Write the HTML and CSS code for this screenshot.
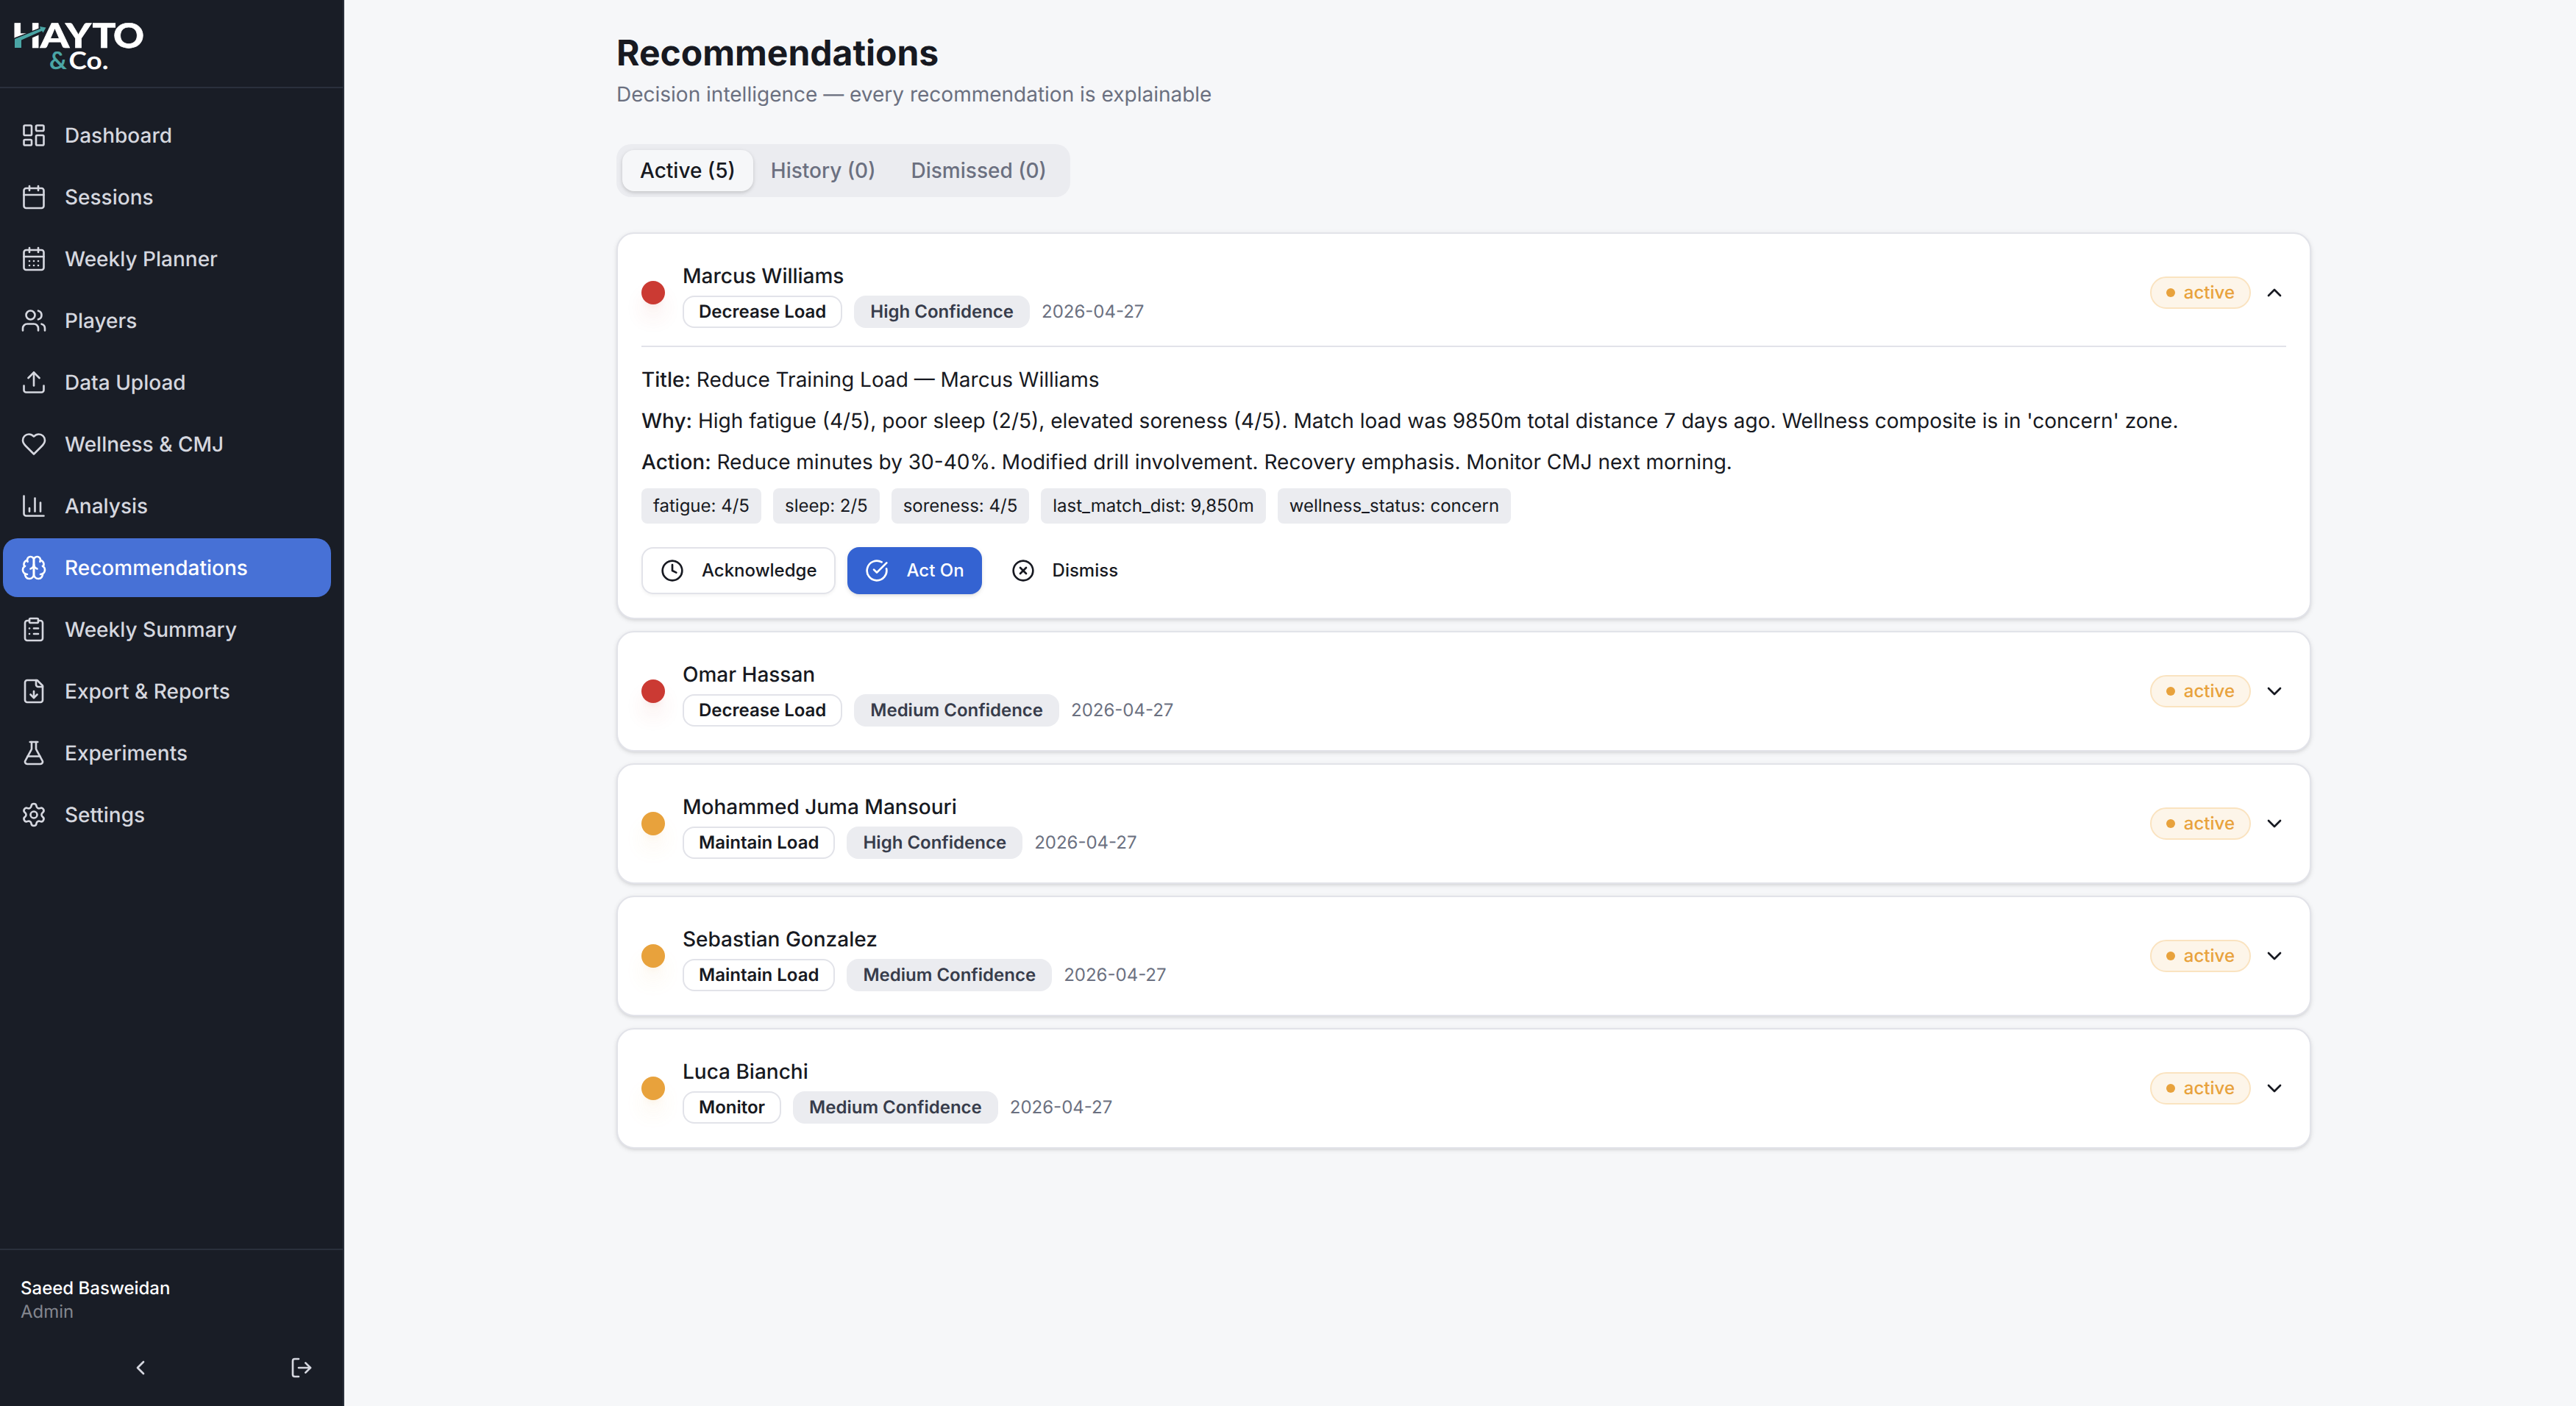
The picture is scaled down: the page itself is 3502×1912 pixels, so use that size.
FILE: index.html
```html
<!DOCTYPE html>
<html lang="en">
<head>
    <meta charset="UTF-8">
    <meta name="viewport" content="width=device-width, initial-scale=1.0">
    <title>Recommendations - Hayto &amp; Co.</title>
    <link rel="stylesheet" href="styles.css">
</head>
<body>
    <div class="app">
        <aside class="sidebar">
            <div class="brand">
                <svg class="logo" width="200" height="88" viewBox="-4 0 200 88">
                    <text class="logo-main" y="49"><tspan x="-2" textLength="40" lengthAdjust="spacingAndGlyphs">H</tspan><tspan x="36.800" textLength="39.500" lengthAdjust="spacingAndGlyphs">A</tspan><tspan x="71" textLength="35" lengthAdjust="spacingAndGlyphs">Y</tspan><tspan x="107.500" textLength="32" lengthAdjust="spacingAndGlyphs">T</tspan><tspan x="136" textLength="42" lengthAdjust="spacingAndGlyphs">O</tspan></text>
                    <path class="logo-gap" d="M2 37 L38 23 L44 21 L39 28 L11 40"/>
                    <path class="logo-arrow" d="M2 37 L37 23 L36 20 L44.500 21.500 L40.500 28.500 L39 26 L11 38.500 V49 H2 Z"/>
                    <text class="logo-amp" x="49" y="78">&amp;</text>
                    <text class="logo-co" x="75.500" y="78" textLength="54" lengthAdjust="spacingAndGlyphs">Co.</text>
                </svg>
            </div>

            <nav class="nav">
                <a class="nav-item">
                    <svg class="icon" viewBox="0 0 24 24"><rect x="3" y="3" width="7" height="9" rx="1"/><rect x="14" y="3" width="7" height="5" rx="1"/><rect x="14" y="12" width="7" height="9" rx="1"/><rect x="3" y="16" width="7" height="5" rx="1"/></svg>
                    Dashboard
                </a>
                <a class="nav-item">
                    <svg class="icon" viewBox="0 0 24 24"><path d="M8 2v4"/><path d="M16 2v4"/><rect x="3" y="4" width="18" height="18" rx="2"/><path d="M3 10h18"/></svg>
                    Sessions
                </a>
                <a class="nav-item">
                    <svg class="icon" viewBox="0 0 24 24"><path d="M8 2v4"/><path d="M16 2v4"/><rect x="3" y="4" width="18" height="18" rx="2"/><path d="M3 10h18"/><path d="M8 14h.01"/><path d="M12 14h.01"/><path d="M16 14h.01"/><path d="M8 18h.01"/><path d="M12 18h.01"/><path d="M16 18h.01"/></svg>
                    Weekly Planner
                </a>
                <a class="nav-item">
                    <svg class="icon" viewBox="0 0 24 24"><path d="M16 21v-2a4 4 0 0 0-4-4H6a4 4 0 0 0-4 4v2"/><circle cx="9" cy="7" r="4"/><path d="M22 21v-2a4 4 0 0 0-3-3.870"/><path d="M16 3.130a4 4 0 0 1 0 7.750"/></svg>
                    Players
                </a>
                <a class="nav-item">
                    <svg class="icon" viewBox="0 0 24 24"><path d="M12 3v12"/><path d="m17 8-5-5-5 5"/><path d="M21 15v4a2 2 0 0 1-2 2H5a2 2 0 0 1-2-2v-4"/></svg>
                    Data Upload
                </a>
                <a class="nav-item">
                    <svg class="icon" viewBox="0 0 24 24"><path d="M19 14c1.490-1.460 3-3.210 3-5.500A5.500 5.500 0 0 0 16.500 3c-1.760 0-3 .5-4.500 2-1.500-1.500-2.740-2-4.500-2A5.500 5.500 0 0 0 2 8.500c0 2.300 1.500 4.050 3 5.500l7 7Z"/></svg>
                    Wellness &amp; CMJ
                </a>
                <a class="nav-item">
                    <svg class="icon" viewBox="0 0 24 24"><path d="M3 3v16a2 2 0 0 0 2 2h16"/><path d="M18 17V9"/><path d="M13 17V5"/><path d="M8 17v-3"/></svg>
                    Analysis
                </a>
                <a class="nav-item active">
                    <svg class="icon" viewBox="0 0 24 24"><path d="M12 5a3 3 0 1 0-5.997.125 4 4 0 0 0-2.526 5.770 4 4 0 0 0 .556 6.588A4 4 0 1 0 12 18Z"/><path d="M12 5a3 3 0 1 1 5.997.125 4 4 0 0 1 2.526 5.770 4 4 0 0 1-.556 6.588A4 4 0 1 1 12 18Z"/><path d="M15 13a4.500 4.500 0 0 1-3-4 4.500 4.500 0 0 1-3 4"/><path d="M17.599 6.500a3 3 0 0 0 .399-1.375"/><path d="M6.003 5.125A3 3 0 0 0 6.401 6.500"/><path d="M3.477 10.896a4 4 0 0 1 .585-.396"/><path d="M19.938 10.500a4 4 0 0 1 .585.396"/><path d="M6 18a4 4 0 0 1-1.967-.516"/><path d="M19.967 17.484A4 4 0 0 1 18 18"/></svg>
                    Recommendations
                </a>
                <a class="nav-item">
                    <svg class="icon" viewBox="0 0 24 24"><rect x="8" y="2" width="8" height="4" rx="1"/><path d="M16 4h2a2 2 0 0 1 2 2v14a2 2 0 0 1-2 2H6a2 2 0 0 1-2-2V6a2 2 0 0 1 2-2h2"/><path d="M12 11h4"/><path d="M12 16h4"/><path d="M8 11h.01"/><path d="M8 16h.01"/></svg>
                    Weekly Summary
                </a>
                <a class="nav-item">
                    <svg class="icon" viewBox="0 0 24 24"><path d="M15 2H6a2 2 0 0 0-2 2v16a2 2 0 0 0 2 2h12a2 2 0 0 0 2-2V7Z"/><path d="M14 2v4a2 2 0 0 0 2 2h4"/><path d="M12 18v-6"/><path d="m9 15 3 3 3-3"/></svg>
                    Export &amp; Reports
                </a>
                <a class="nav-item">
                    <svg class="icon" viewBox="0 0 24 24"><path d="M14 2v6a2 2 0 0 0 .245.960l5.510 10.080A2 2 0 0 1 18 22H6a2 2 0 0 1-1.755-2.960l5.510-10.080A2 2 0 0 0 10 8V2"/><path d="M6.453 15h11.094"/><path d="M8.500 2h7"/></svg>
                    Experiments
                </a>
                <a class="nav-item">
                    <svg class="icon" viewBox="0 0 24 24"><path d="M9.671 4.136a2.340 2.340 0 0 1 4.659 0 2.340 2.340 0 0 0 3.319 1.915 2.340 2.340 0 0 1 2.330 4.033 2.340 2.340 0 0 0 0 3.831 2.340 2.340 0 0 1-2.330 4.033 2.340 2.340 0 0 0-3.319 1.915 2.340 2.340 0 0 1-4.659 0 2.340 2.340 0 0 0-3.320-1.915 2.340 2.340 0 0 1-2.330-4.033 2.340 2.340 0 0 0 0-3.831A2.340 2.340 0 0 1 6.350 6.051a2.340 2.340 0 0 0 3.319-1.915"/><circle cx="12" cy="12" r="3"/></svg>
                    Settings
                </a>
            </nav>

            <div class="user">
                <p class="user-name">Saeed Basweidan</p>
                <p class="user-role">Admin</p>
                <div class="user-actions">
                    <button class="collapse"><svg class="icon-sm" viewBox="0 0 24 24"><path d="m15 18-6-6 6-6"/></svg></button>
                    <button class="logout"><svg class="icon-sm" viewBox="0 0 24 24"><path d="M9 21H5a2 2 0 0 1-2-2V5a2 2 0 0 1 2-2h4"/><path d="m16 17 5-5-5-5"/><path d="M21 12H9"/></svg></button>
                </div>
            </div>
        </aside>

        <main class="main">
            <div class="content">
                <h1>Recommendations</h1>
                <p class="subtitle">Decision intelligence — every recommendation is explainable</p>

                <div class="tabs">
                    <button class="tab selected">Active (5)</button>
                    <button class="tab">History (0)</button>
                    <button class="tab">Dismissed (0)</button>
                </div>

                <div class="cards">
                    <section class="card">
                        <div class="card-head">
                            <span class="dot red"></span>
                            <div class="info">
                                <p class="name">Marcus Williams</p>
                                <div class="meta">
                                    <span class="badge outline">Decrease Load</span>
                                    <span class="badge">High Confidence</span>
                                    <span class="date">2026-04-27</span>
                                </div>
                            </div>
                            <span class="status">active</span>
                            <svg class="icon-sm" viewBox="0 0 24 24"><path d="m18 15-6-6-6 6"/></svg>
                        </div>
                        <div class="details">
                            <p><strong>Title:</strong> Reduce Training Load — Marcus Williams</p>
                            <p><strong>Why:</strong> High fatigue (4/5), poor sleep (2/5), elevated soreness (4/5). Match load was 9850m total distance 7 days ago. Wellness composite is in 'concern' zone.</p>
                            <p><strong>Action:</strong> Reduce minutes by 30-40%. Modified drill involvement. Recovery emphasis. Monitor CMJ next morning.</p>
                            <div class="tags">
                                <span class="tag">fatigue: 4/5</span>
                                <span class="tag">sleep: 2/5</span>
                                <span class="tag">soreness: 4/5</span>
                                <span class="tag">last_match_dist: 9,850m</span>
                                <span class="tag">wellness_status: concern</span>
                            </div>
                            <div class="actions">
                                <button class="btn btn-outline"><svg class="icon-sm" viewBox="0 0 24 24"><circle cx="12" cy="12" r="10"/><path d="M12 6v6l4 2"/></svg>Acknowledge</button>
                                <button class="btn btn-primary"><svg class="icon-sm" viewBox="0 0 24 24"><path d="M21.801 10A10 10 0 1 1 17 3.335"/><path d="m9 11 3 3L22 4"/></svg>Act On</button>
                                <button class="btn"><svg class="icon-sm" viewBox="0 0 24 24"><circle cx="12" cy="12" r="10"/><path d="m15 9-6 6"/><path d="m9 9 6 6"/></svg>Dismiss</button>
                            </div>
                        </div>
                    </section>

                    <section class="card">
                        <div class="card-head">
                            <span class="dot red"></span>
                            <div class="info">
                                <p class="name">Omar Hassan</p>
                                <div class="meta">
                                    <span class="badge outline">Decrease Load</span>
                                    <span class="badge">Medium Confidence</span>
                                    <span class="date">2026-04-27</span>
                                </div>
                            </div>
                            <span class="status">active</span>
                            <svg class="icon-sm" viewBox="0 0 24 24"><path d="m6 9 6 6 6-6"/></svg>
                        </div>
                    </section>

                    <section class="card">
                        <div class="card-head">
                            <span class="dot amber"></span>
                            <div class="info">
                                <p class="name">Mohammed Juma Mansouri</p>
                                <div class="meta">
                                    <span class="badge outline">Maintain Load</span>
                                    <span class="badge">High Confidence</span>
                                    <span class="date">2026-04-27</span>
                                </div>
                            </div>
                            <span class="status">active</span>
                            <svg class="icon-sm" viewBox="0 0 24 24"><path d="m6 9 6 6 6-6"/></svg>
                        </div>
                    </section>

                    <section class="card">
                        <div class="card-head">
                            <span class="dot amber"></span>
                            <div class="info">
                                <p class="name">Sebastian Gonzalez</p>
                                <div class="meta">
                                    <span class="badge outline">Maintain Load</span>
                                    <span class="badge">Medium Confidence</span>
                                    <span class="date">2026-04-27</span>
                                </div>
                            </div>
                            <span class="status">active</span>
                            <svg class="icon-sm" viewBox="0 0 24 24"><path d="m6 9 6 6 6-6"/></svg>
                        </div>
                    </section>

                    <section class="card">
                        <div class="card-head">
                            <span class="dot amber"></span>
                            <div class="info">
                                <p class="name">Luca Bianchi</p>
                                <div class="meta">
                                    <span class="badge outline">Monitor</span>
                                    <span class="badge">Medium Confidence</span>
                                    <span class="date">2026-04-27</span>
                                </div>
                            </div>
                            <span class="status">active</span>
                            <svg class="icon-sm" viewBox="0 0 24 24"><path d="m6 9 6 6 6-6"/></svg>
                        </div>
                    </section>
                </div>
            </div>
        </main>
    </div>
</body>
</html>
```
FILE: styles.css
```css
* {
    margin: 0;
    padding: 0;
    box-sizing: border-box;
}

body {
    font-family: 'Inter', 'Helvetica Neue', Arial, sans-serif;
    font-size: 28px;
    line-height: 40px;
    color: #171921;
    background-color: #f6f7f9;
    text-rendering: geometricPrecision;
}

button {
    font: inherit;
    color: inherit;
    background: none;
    border: none;
    cursor: pointer;
}

.app {
    display: flex;
    height: 100vh;
}

/* Icons */
.icon,
.icon-sm {
    flex: none;
    display: block;
    fill: none;
    stroke: currentColor;
    stroke-width: 2;
    stroke-linecap: round;
    stroke-linejoin: round;
}

.icon {
    width: 36px;
    height: 36px;
    stroke-width: 1.75;
}

.icon-sm {
    width: 32px;
    height: 32px;
}

/* Sidebar */
.sidebar {
    flex: none;
    width: 468px;
    display: flex;
    flex-direction: column;
    background-color: #191d26;
    color: #d5d7df;
    border-right: 2px solid #2a303c;
}

.brand {
    height: 120px;
    padding: 16px 14px 0;
    border-bottom: 2px solid #2a303c;
}

.logo {
    display: block;
}

.logo text {
    font-family: 'Lato', sans-serif;
    fill: #ffffff;
}

.logo .logo-main {
    font-size: 46px;
    font-weight: 900;
    stroke: #ffffff;
    stroke-width: 0.6;
}

.logo-gap {
    fill: none;
    stroke: #191d26;
    stroke-width: 3;
}

.logo-arrow {
    stroke: #191d26;
    stroke-width: 2;
    paint-order: stroke;
}

.logo-arrow,
.logo .logo-amp {
    fill: #4aa5a5;
}

.logo-amp,
.logo-co {
    font-size: 33px;
    font-weight: 700;
}

.nav {
    flex: 1;
    display: flex;
    flex-direction: column;
    gap: 4px;
    padding: 24px 16px 24px 4px;
}

.nav-item {
    display: flex;
    align-items: center;
    gap: 24px;
    height: 80px;
    padding: 0 24px;
    border-radius: 20px;
    font-weight: 500;
}

.nav-item.active {
    background-color: #4771d6;
    color: #ffffff;
}

.user {
    height: 214px;
    padding: 36px 28px 0;
    border-top: 2px solid #2a303c;
    font-size: 24px;
    line-height: 32px;
}

.user-name {
    color: #ffffff;
    font-weight: 500;
}

.user-role {
    color: #84878f;
}

.user-actions {
    display: flex;
    align-items: center;
    margin-top: 24px;
    height: 72px;
}

.collapse {
    flex: 1;
    display: flex;
    justify-content: center;
}

.logout {
    margin: 0 12px 0 40px;
}

/* Main area */
.main {
    flex: 1;
    display: flex;
    justify-content: center;
    padding: 40px 0 0 10px;
}

.content {
    width: 2304px;
}

h1 {
    font-size: 48px;
    line-height: 64px;
    font-weight: 700;
}

.subtitle {
    margin-top: 4px;
    color: #6b7080;
}

.tabs {
    display: inline-flex;
    height: 72px;
    margin-top: 48px;
    padding: 8px;
    border-radius: 20px;
    background-color: #ebecf0;
    vertical-align: top;
}

.tab {
    padding: 0 24px;
    border-radius: 16px;
    color: #6b7080;
    font-weight: 500;
}

.tab.selected {
    background-color: #f6f7f9;
    color: #171921;
    box-shadow: 0 2px 6px rgba(0, 0, 0, 0.1), 0 2px 4px rgba(0, 0, 0, 0.08);
}

/* Recommendation cards */
.cards {
    display: flex;
    flex-direction: column;
    gap: 16px;
    margin-top: 48px;
}

.card {
    padding: 32px;
    border: 2px solid #e2e3e9;
    border-radius: 24px;
    background-color: #ffffff;
    box-shadow: 0 2px 6px rgba(0, 0, 0, 0.1), 0 2px 4px -2px rgba(0, 0, 0, 0.1);
}

.card-head {
    display: flex;
    align-items: center;
    gap: 16px;
}

.dot {
    flex: none;
    width: 32px;
    height: 32px;
    border-radius: 50%;
}

.dot.red {
    background-color: #cb3a33;
    box-shadow: 0 20px 30px -6px rgba(203, 58, 51, 0.2), 0 8px 12px -8px rgba(203, 58, 51, 0.2);
}

.dot.amber {
    background-color: #e8a23c;
    box-shadow: 0 20px 30px -6px rgba(232, 162, 60, 0.2), 0 8px 12px -8px rgba(232, 162, 60, 0.2);
}

.info {
    flex: 1;
    margin-left: 8px;
}

.name {
    padding-top: 2px;
    line-height: 46px;
    font-weight: 500;
}

.meta {
    display: flex;
    align-items: center;
    gap: 16px;
    margin-top: 4px;
    font-size: 24px;
    line-height: 32px;
}

.badge {
    padding: 4px 20px;
    border: 2px solid transparent;
    border-radius: 16px;
    background-color: #ebecf0;
    color: #373c4b;
    font-weight: 600;
}

.badge.outline {
    border-color: #e2e3e9;
    background-color: #ffffff;
    color: #171921;
}

.date {
    color: #6b7080;
}

.status {
    display: flex;
    align-items: center;
    gap: 12px;
    height: 44px;
    padding: 0 20px;
    border: 2px solid #fae3c0;
    border-radius: 22px;
    background-color: #fdf5e9;
    color: #e8a23c;
    font-size: 24px;
    font-weight: 500;
}

.status::before {
    content: '';
    width: 12px;
    height: 12px;
    border-radius: 50%;
    background-color: #e8a23c;
}

.details {
    display: flex;
    flex-direction: column;
    gap: 16px;
    margin-top: 24px;
    padding-top: 24px;
    border-top: 2px solid #e2e3e9;
}

.details strong {
    font-weight: 500;
}

.tags {
    display: flex;
    gap: 16px;
}

.tag {
    padding: 8px 16px;
    border-radius: 8px;
    background-color: #ebecf0;
    font-size: 24px;
    line-height: 32px;
}

.actions {
    display: flex;
    gap: 16px;
    margin-top: 16px;
}

.btn {
    display: flex;
    align-items: center;
    gap: 24px;
    height: 64px;
    padding: 0 24px;
    border-radius: 16px;
    font-size: 24px;
    font-weight: 500;
}

.btn-outline {
    border: 2px solid #e2e3e9;
    box-shadow: 0 2px 4px rgba(0, 0, 0, 0.05);
}

.btn-primary {
    background-color: #3463d2;
    color: #ffffff;
    box-shadow: 0 2px 6px rgba(0, 0, 0, 0.1), 0 2px 4px -2px rgba(0, 0, 0, 0.1);
}
```
